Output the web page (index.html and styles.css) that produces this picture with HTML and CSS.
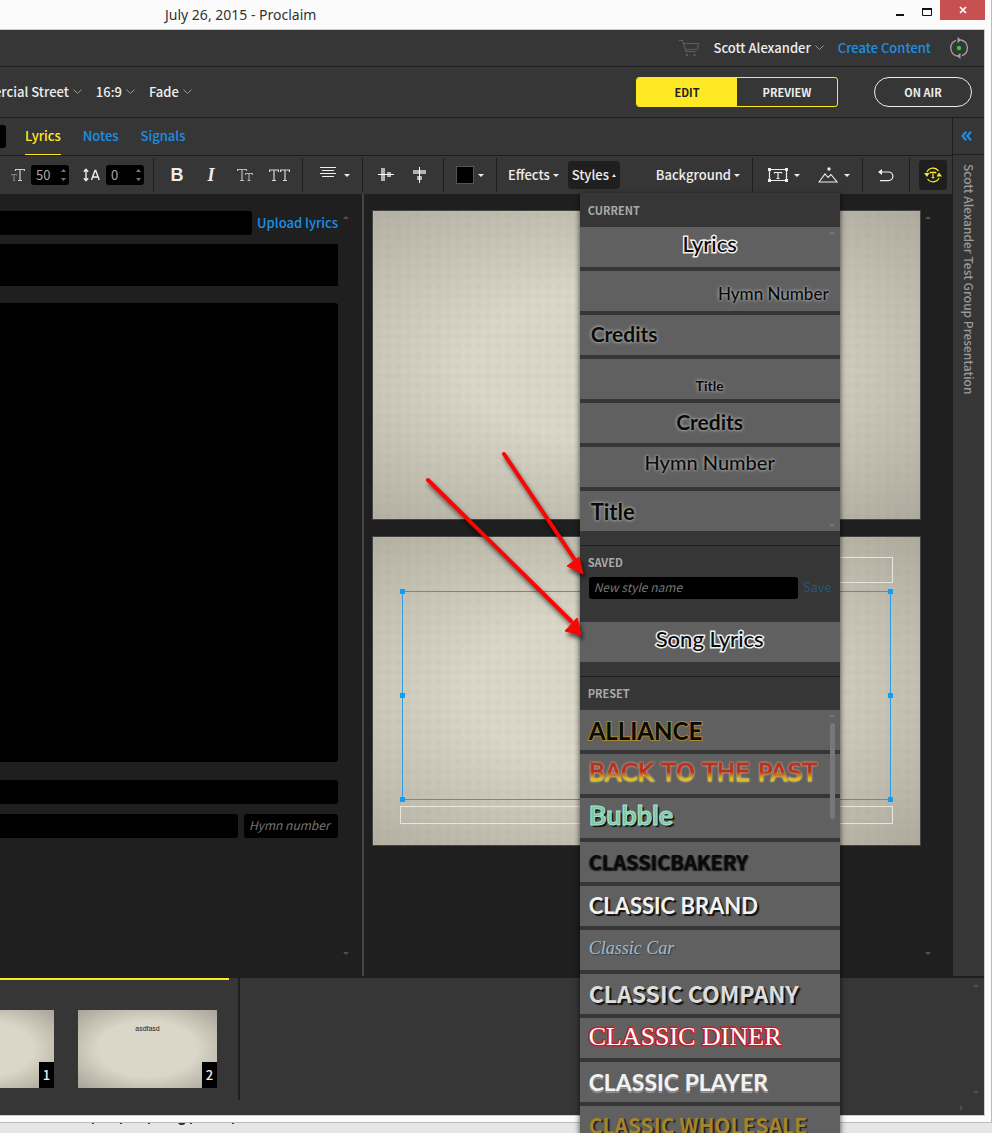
FILE: index.html
```html
<!DOCTYPE html>
<html lang="en">
<head>
<meta charset="utf-8">
<title>July 26, 2015 - Proclaim</title>
<link rel="stylesheet" href="styles.css">
</head>
<body>
<div class="page">
  <div class="window">
    <header class="titlebar">
      <h1 class="title">July 26, 2015 - Proclaim</h1>
      <div class="window-buttons">
        <button class="win-btn" aria-label="Minimize"><svg width="8" height="12"><path d="M0 10h8v2H0z" fill="#111"/></svg></button>
        <button class="win-btn" aria-label="Maximize"><svg width="10" height="12"><path d="M.5 4.500h9v7h-9z" fill="none" stroke="#111"/><path d="M0 4h10v2H0z" fill="#111"/></svg></button>
        <button class="win-btn win-close" aria-label="Close"><svg width="8" height="8"><path d="M1 1l6 6M7 1L1 7" stroke="#fff" stroke-width="1.700"/></svg></button>
      </div>
    </header>

    <div class="app">
      <div class="account-bar">
        <button class="plain" aria-label="Cart"><svg width="22" height="18" fill="none" stroke="#5c5c5c" stroke-width="1.200"><path d="M1 1.500h3.500l3.500 11h10.500M5.500 4.500h15l-1 5.500-12.500 1"/><circle cx="9" cy="16" r="1.200" fill="#5c5c5c" stroke="none"/><circle cx="16.500" cy="16" r="1.200" fill="#5c5c5c" stroke="none"/></svg></button>
        <button class="plain account">Scott Alexander <svg class="chev" width="9" height="6"><path d="M.5.5l4 4 4-4"/></svg></button>
        <a class="link" href="#">Create Content</a>
        <button class="plain" aria-label="Sync status"><svg width="20" height="22" fill="none" stroke="#a0a0a0" stroke-width="1.300"><path d="M8 19A8.200 8.200 0 0 1 7 3.400M12 3a8.200 8.200 0 0 1 1 15.700"/><path d="M8.500 0v6l4-3zM11.500 16v6l-4-3z" fill="#a0a0a0" stroke="none"/><circle cx="10" cy="11" r="2.200" fill="#1fd13c" stroke="none"/></svg></button>
      </div>

      <div class="show-bar">
        <label class="pick"><select aria-label="Location"><option>ercial Street</option></select><svg class="chev" width="9" height="6"><path d="M.5.5l4 4 4-4"/></svg></label>
        <label class="pick"><select aria-label="Aspect ratio"><option>16:9</option></select><svg class="chev" width="9" height="6"><path d="M.5.5l4 4 4-4"/></svg></label>
        <label class="pick"><select aria-label="Transition"><option>Fade</option></select><svg class="chev" width="9" height="6"><path d="M.5.5l4 4 4-4"/></svg></label>
        <div class="modes">
          <button class="mode mode-on">EDIT</button>
          <button class="mode">PREVIEW</button>
        </div>
        <button class="on-air">ON AIR</button>
      </div>

      <div class="workspace">
        <main class="work">
          <nav class="tabs">
            <span class="tab-stub"></span>
            <a class="tab tab-on" href="#">Lyrics</a>
            <a class="tab" href="#">Notes</a>
            <a class="tab" href="#">Signals</a>
          </nav>

          <div class="toolbar">
            <div class="group group-size">
              <svg width="14" height="14" fill="none" stroke="#ccc"><path d="M4.500 3V1.500h9V3M9 1.500v11M7 12.500h4" stroke-width="1.200"/><path d="M.5 7.500V6.500h5v1M3 6.500v6M2 12.500h2" stroke="#888"/></svg>
              <span class="spin"><input type="number" aria-label="Font size" value="50"><svg width="5" height="12"><path d="M0 3l2.500-3L5 3zM0 9l2.500 3L5 9z" fill="#777"/></svg></span>
              <svg class="lh-icon" width="17" height="14" fill="none" stroke="#eee" stroke-width="1.400"><path d="M3 2v10M.8 3.700L3 1.200l2.200 2.500M.8 10.300L3 12.800l2.200-2.500M8.500 12L12 2.500h.7L16.200 12M9.700 9h5.300"/></svg>
              <span class="spin"><input type="number" aria-label="Line spacing" value="0"><svg width="5" height="12"><path d="M0 3l2.500-3L5 3zM0 9l2.500 3L5 9z" fill="#777"/></svg></span>
            </div>
            <div class="group">
              <button class="tool tool-b">B</button>
              <button class="tool tool-i">I</button>
              <button class="tool tool-t" aria-label="Small caps"><svg width="17" height="14" fill="none" stroke="#bbb"><path d="M.5 3V1.500h9V3M5 1.500v11M3 12.500h4" stroke-width="1.200"/><path d="M8.500 7V5.500h7V7M12 5.500v7M10.500 12.500h3"/></svg></button>
              <button class="tool tool-t" aria-label="All caps"><svg width="21" height="14" fill="none" stroke="#d8d8d8" stroke-width="1.200"><path d="M.6 4V2h8.800v2M5 2v10.500M3 12.500h4M11.600 4V2h8.800v2M16 2v10.500M14 12.500h4"/></svg></button>
            </div>
            <div class="group group-menu">
              <button class="drop" aria-label="Align text"><svg class="align-icon" width="16" height="14" stroke="#eee"><path d="M0 .5h16M2 3.500h12M0 6.500h16M2 9.500h12"/></svg><i class="caret"></i></button>
            </div>
            <div class="group">
              <button class="tool" aria-label="Align middle"><svg width="16" height="14"><path d="M3 0h4v13H3zM9 4h4v5H9z" fill="#b4b4b4"/><path d="M0 6h16v1H0z" fill="#fff"/></svg></button>
              <button class="tool" aria-label="Align center"><svg width="14" height="16"><path d="M0 3h13v4H0zM4 9h5v4H4z" fill="#b4b4b4"/><path d="M6 0h1v16H6z" fill="#fff"/></svg></button>
            </div>
            <div class="group group-color">
              <button class="drop" aria-label="Text color"><span class="swatch"></span><i class="caret"></i></button>
            </div>
            <div class="group group-text">
              <button class="drop">Effects<i class="caret"></i></button>
              <div class="styles">
                <button class="drop styles-btn" aria-expanded="true">Styles<i class="caret caret-up"></i></button>
                <div class="menu">
                  <section class="sect">
                    <h2 class="sect-title">CURRENT</h2>
                    <div class="list">
                      <button class="item a-center s-lyrics">Lyrics</button>
                      <button class="item a-right s-hymn">Hymn Number</button>
                      <button class="item a-left s-credits">Credits</button>
                      <button class="item a-center s-title">Title</button>
                      <button class="item a-center s-credits">Credits</button>
                      <button class="item a-center s-hymn-big">Hymn Number</button>
                      <button class="item a-left s-title-big">Title</button>
                      <i class="tri tri-up list-up"></i><i class="tri tri-down list-down"></i>
                    </div>
                  </section>
                  <section class="sect">
                    <h2 class="sect-title">SAVED</h2>
                    <form class="save-row">
                      <input class="style-name" type="text" aria-label="New style name" placeholder="New style name">
                      <button class="save" type="button">Save</button>
                    </form>
                    <div class="list">
                      <button class="item a-center s-song">Song Lyrics</button>
                    </div>
                  </section>
                  <section class="sect">
                    <h2 class="sect-title">PRESET</h2>
                    <div class="list">
                      <button class="item p-alliance">ALLIANCE</button>
                      <button class="item"><span class="p-past">BACK TO THE PAST</span></button>
                      <button class="item p-bubble">Bubble</button>
                      <button class="item p-narrow p-bakery">CLASSICBAKERY</button>
                      <button class="item p-brand">CLASSIC BRAND</button>
                      <button class="item p-car">Classic Car</button>
                      <button class="item p-narrow p-company">CLASSIC COMPANY</button>
                      <button class="item p-diner">CLASSIC DINER</button>
                      <button class="item p-player">CLASSIC PLAYER</button>
                      <button class="item p-narrow p-wholesale">CLASSIC WHOLESALE</button>
                      <i class="tri tri-up list-up"></i><i class="thumb-bar"></i>
                    </div>
                  </section>
                  <svg class="pointers" width="172" height="200">
                    <g stroke="#fb0505" stroke-width="4" stroke-linecap="round"><path d="M84 6l71 106M8 32l143 141"/></g>
                    <path d="M163 126l-16-8 12-9zM161 187l-16-4 12-13z" fill="#fb0505" stroke="#fb0505" stroke-linejoin="round"/>
                  </svg>
                </div>
              </div>
              <button class="drop bg-btn">Background<i class="caret"></i></button>
            </div>
            <div class="group group-insert">
              <button class="drop" aria-label="Insert text"><svg width="20" height="16" fill="none" stroke="#eee"><path d="M1.500 2.500h17v11h-17z" stroke-width="1.200"/><path d="M6.500 6.500v-1h7v1M10 5.500v6M8.500 11.500h3" stroke-width="1.200"/><path d="M0 1h3v3H0zM17 1h3v3h-3zM0 12h3v3H0zM17 12h3v3h-3z" fill="#eee" stroke="none"/></svg><i class="caret"></i></button>
              <button class="drop" aria-label="Insert image"><svg width="20" height="16" fill="none" stroke="#eee" stroke-width="1.100"><path d="M1 15L7 7l3 3.500L13 7.500 19 15z"/><circle cx="11" cy="2" r="1.700" fill="#eee" stroke="none"/></svg><i class="caret"></i></button>
            </div>
            <div class="group group-undo">
              <button class="tool" aria-label="Undo"><svg width="17" height="13" fill="none" stroke="#eee" stroke-width="1.200"><path d="M2 3h8.500a4.300 4.300 0 0 1 0 8.700H2"/><path d="M0 3l4-3v6z" fill="#eee" stroke="none"/></svg></button>
            </div>
            <div class="group group-sync">
              <button class="sync" aria-label="Sync text"><svg width="18" height="16" fill="none" stroke="#ffe924" stroke-width="1.200"><path d="M3 5A6.700 6.700 0 0 1 14.500 4M15 11A6.700 6.700 0 0 1 3.500 12"/><path d="M0 6h5.500L3 10zM12.500 9.500H18l-3-4z" fill="#ffe924" stroke="none"/><path d="M6.300 6.500V5.300h5.400v1.200M9 5.300v5.400M7.700 10.700h2.600"/></svg></button>
            </div>
          </div>

          <div class="editor">
            <form class="lyrics">
              <i class="tri tri-up edge-up"></i><i class="tri tri-down edge-down"></i>
              <div class="row">
                <input class="field grow" type="text" aria-label="Song title">
                <a class="link" href="#">Upload lyrics</a>
              </div>
              <input class="field field-order" type="text" aria-label="Verse order">
              <textarea class="field field-lyrics" aria-label="Lyrics"></textarea>
              <input class="field" type="text" aria-label="Copyright">
              <div class="row row-end">
                <input class="field grow" type="text" aria-label="Hymnal">
                <input class="field field-hymn" type="text" aria-label="Hymn number" placeholder="Hymn number">
              </div>
            </form>
            <div class="canvas">
              <i class="tri tri-up edge-up"></i><i class="tri tri-down edge-down"></i>
              <div class="slide"></div>
              <div class="slide">
                <div class="box box-top"></div>
                <div class="box box-bottom"></div>
                <div class="selection"><i class="h h1"></i><i class="h h2"></i><i class="h h3"></i><i class="h h4"></i><i class="h h5"></i><i class="h h6"></i></div>
              </div>
            </div>
          </div>
        </main>
        <aside class="side">
          <button class="plain side-toggle" aria-label="Expand panel"><svg width="11" height="10" fill="none" stroke="#1b8fe8" stroke-width="2.200"><path d="M5.200.7L1.500 5l3.700 4.300M10 .7L6.300 5 10 9.300"/></svg></button>
          <span class="side-label">Scott Alexander Test Group Presentation</span>
        </aside>
      </div>

      <footer class="film">
        <div class="film-group">
          <div class="thumb"><span class="num">1</span></div>
          <div class="thumb"><span class="caption">asdfasd</span><span class="num">2</span></div>
        </div>
        <i class="tri tri-up film-up"></i><i class="tri tri-down film-down"></i><i class="tri tri-right film-right"></i>
      </footer>
    </div>
  </div>
  <div class="desktop"><svg width="240" height="3"><path d="M92 0h2v1h-2zM120 0h2v1h-2zM148 0h2v1h-2zM178 0h7v1l-2 1h-3zM190 0h2v1h-2zM232 0h2v1h-2z" fill="#333"/></svg></div>
</div>
</body>
</html>
```
FILE: styles.css
```css
* { box-sizing: border-box; }
body { margin: 0; overflow: hidden; font-family: "Noto Sans CJK SC", "Noto Sans", sans-serif; font-size: 13px; line-height: 20px; font-weight: 500; color: #eee; }
button, input, select, textarea { font: inherit; color: inherit; border: 0; background: none; padding: 0; margin: 0; }
a { text-decoration: none; }
svg { display: block; flex: none; }
i { font-style: normal; }
h1, h2 { margin: 0; font: inherit; }

.page { height: 100vh; display: flex; flex-direction: column; background: #e5e6e7; }
.window { flex: 1; min-height: 0; display: flex; flex-direction: column; background: #fbfbfb; padding: 0 6px 6px 0; border-right: 1px solid #bbb; border-bottom: 1px solid #bbb; }
.desktop { height: 10px; flex: none; }

.titlebar { height: 29px; flex: none; display: flex; justify-content: space-between; align-items: flex-start; }
.title { padding: 5px 0 0 165px; font-family: "Noto Sans", sans-serif; font-size: 14px; font-weight: 400; color: #333; }
.window-buttons { display: flex; }
.win-btn { width: 27px; height: 20px; display: flex; justify-content: center; align-items: center; }
.win-close { width: 45px; background: #c75050; }

.app { flex: 1; min-height: 0; display: flex; flex-direction: column; background: #363636; border: 1px solid #ccc; border-left: 0; }
.plain { display: flex; align-items: center; }
.chev { fill: none; stroke: #999; }
.link { color: #1b8fe8; }

.account-bar { flex: none; height: 37px; display: flex; align-items: center; justify-content: flex-end; gap: 14px; padding-right: 15px; border-bottom: 1px solid #1f1f1f; }
.account { gap: 4px; }
.account-bar > .plain:last-child { margin-left: 4px; }

.show-bar { flex: none; height: 51px; display: flex; align-items: center; padding-right: 12px; border-bottom: 1px solid #1f1f1f; }
.pick { display: flex; align-items: center; gap: 4px; margin-right: 14px; }
.pick:first-child { margin-left: -6px; }
.pick select { appearance: none; field-sizing: content; }
.modes { margin-left: auto; display: flex; width: 202px; height: 30px; border: 1px solid #ffe924; border-radius: 3px; overflow: hidden; font-size: 11px; font-weight: 700; }
.mode { flex: 1; }
.mode-on { background: #ffe924; color: #222; }
.on-air { margin-left: 36px; width: 98px; height: 30px; border: 1px solid #eee; border-radius: 15px; font-size: 11px; font-weight: 700; }

.workspace { flex: 1; min-height: 0; display: flex; border-bottom: 2px solid #1f1f1f; }
.work { flex: 1; min-width: 0; display: flex; flex-direction: column; }
.side { flex: none; width: 32px; border-left: 1px solid #1f1f1f; display: flex; flex-direction: column; align-items: center; }
.side-toggle { height: 37px; width: 100%; justify-content: center; padding-right: 5px; border-bottom: 1px solid #1f1f1f; }
.side-label { writing-mode: vertical-rl; margin-top: 9px; white-space: nowrap; font-size: 12px; color: #999; }

.tabs { flex: none; height: 38px; display: flex; align-items: center; gap: 22px; border-bottom: 1px solid #1f1f1f; }
.tab-stub { width: 6px; height: 23px; margin-right: -3px; background: #000; border-radius: 0 3px 3px 0; }
.tab { height: 37px; line-height: 36px; color: #1b8fe8; }
.tab-on { color: #ffe924; border-bottom: 1px solid #ffe924; }

.toolbar { flex: none; height: 38px; display: flex; align-items: center; }
.group { flex: none; height: 34px; display: flex; align-items: center; padding: 0 6px; border-right: 1px solid #1f1f1f; }
.tool { width: 34px; height: 30px; display: flex; justify-content: center; align-items: center; font-size: 18px; }
.tool-b { font-family: "Liberation Sans", sans-serif; font-weight: 700; }
.tool-i { font-family: "Liberation Serif", serif; font-style: italic; font-weight: 700; }
.drop { display: flex; align-items: center; gap: 4px; height: 28px; }
.caret { border: 3px solid transparent; border-top-color: #eee; border-bottom: 0; }
.caret-up { border: 2px solid transparent; border-top: 0; border-bottom: 3px solid #eee; }
.group-size { padding: 0 9px 0 11px; gap: 6px; }
.lh-icon { margin-left: 8px; }
.spin { width: 38px; height: 20px; display: flex; align-items: center; padding: 0 3px 0 5px; background: #000; border-radius: 3px; color: #aaa; }
.spin input { flex: 1; min-width: 0; width: 20px; height: 20px; appearance: textfield; font-weight: 400; }
.spin input::-webkit-inner-spin-button { appearance: none; }
.group-menu { padding: 0 12px 0 17px; }
.group-menu .drop { gap: 8px; }
.align-icon { margin-bottom: 2px; }
.group-color { padding: 0 12px; }
.swatch { width: 18px; height: 18px; background: #000; border: 1px solid #555; }
.group-text { flex: 1; padding: 0 12px 0 11px; gap: 9px; }
.group-text .drop { gap: 3px; }
.styles { position: relative; }
.group-text .styles-btn { padding: 0 4px; background: #1f1f1f; border-radius: 4px; }
.bg-btn { margin-left: auto; }
.group-insert { padding: 0 12px 0 15px; gap: 18px; }
.group-insert .drop { gap: 6px; }
.group-sync { padding: 0 5px 0 9px; border: 0; }
.sync { width: 28px; height: 30px; display: flex; justify-content: center; align-items: center; background: #1f1f1f; border-radius: 3px; }

.editor { flex: 1; min-height: 0; display: flex; background: #1f1f1f; }
.lyrics { position: relative; flex: 0 0 364px; border-right: 2px solid #444; padding: 17px 24px 0 0; display: flex; flex-direction: column; }
.row { display: flex; align-items: center; gap: 5px; margin-bottom: 9px; }
.row .link { white-space: nowrap; }
.row-end { gap: 6px; margin: 10px 0 0; }
.field { display: block; height: 24px; background: #000; border-radius: 0 3px 3px 0; resize: none; min-width: 0; }
.grow { flex: 1; }
.field-order { flex: none; height: 42px; border-radius: 0; }
.field-lyrics { height: 459px; margin: 17px 0 18px; }
.field-hymn, .style-name { padding: 0 0 3px 5px; border-radius: 3px; font-size: 12px; }
.field-hymn { width: 94px; }
::placeholder { color: #777; font-style: italic; font-weight: 400; opacity: 1; }

.canvas { position: relative; flex: 1; min-width: 0; padding: 16px 31px 0 8px; }
.slide { position: relative; aspect-ratio: 549 / 310; margin-bottom: 16px; border: 1px solid #444; }
.slide, .thumb { background-color: #dad6c8; background-image: radial-gradient(ellipse at 50% 50%, rgba(0,0,0,0) 50%, rgba(60,60,50,.32) 100%); }
.slide { background-image: radial-gradient(ellipse at 45% 50%, rgba(0,0,0,0) 35%, rgba(60,60,50,.28) 100%), radial-gradient(circle, rgba(120,115,90,.04) 3px, rgba(0,0,0,0) 4px); background-size: auto, 10px 10px; }
.box { position: absolute; border: 1px solid #e8e6dc; }
.box-top { left: 60%; right: 5%; top: 6.500%; height: 8.500%; }
.box-bottom { left: 5%; right: 5%; top: 87.200%; height: 6%; }
.selection { position: absolute; left: 5.300%; right: 5.300%; top: 17.500%; bottom: 14.500%; border: 1px solid #2d9ce0; }
.h { position: absolute; width: 5px; height: 5px; background: #109df5; }
.h1, .h2, .h3 { left: -3px; }
.h4, .h5, .h6 { right: -3px; }
.h1, .h4 { top: -3px; }
.h2, .h5 { top: calc(50% - 3px); }
.h3, .h6 { bottom: -3px; }

.tri { position: absolute; border: 3px solid transparent; }
.tri-up { border-top: 0; border-bottom-color: #505050; }
.tri-down { border-bottom: 0; border-top-color: #505050; }
.tri-right { border-right: 0; border-left-color: #505050; }
.edge-up { right: 13px; top: 22px; }
.edge-down { right: 13px; bottom: 21px; }
.canvas .edge-up, .canvas .edge-down { right: 21px; }
.film-up { right: 5px; top: 6px; }
.film-down { right: 5px; bottom: 21px; }
.film-right { right: 21px; bottom: 4px; }

.film { position: relative; flex: none; height: 137px; }
.film-group { position: relative; width: 240px; height: 122px; padding: 32px 21px 0 0; display: flex; justify-content: flex-end; gap: 24px; overflow: hidden; border-right: 2px solid #1f1f1f; }
.film-group::before { content: ""; position: absolute; left: 0; right: 9px; top: 0; height: 2px; background: #ffe924; }
.thumb { position: relative; flex: none; width: 139px; height: 78px; text-align: center; }
.caption { display: block; margin-top: 13px; font: 7px/12px "Liberation Sans", sans-serif; color: #222; }
.num { position: absolute; right: 0; bottom: 0; width: 15px; height: 26px; line-height: 26px; text-align: center; background: #000; }

.menu { position: absolute; z-index: 5; left: 12px; top: 32px; width: 260px; padding-top: 1px; background: #363636; box-shadow: 0 2px 6px rgba(0,0,0,.7); }
.sect { padding-bottom: 14px; border-bottom: 1px solid #1f1f1f; }
.sect-title { padding: 8px 8px 9px; font-size: 11px; line-height: 16px; font-weight: 700; color: #aaa; }
.save-row { display: flex; align-items: center; gap: 5px; margin: -2px 8px 23px 9px; }
.style-name { width: 210px; height: 22px; background: #000; }
.save { height: 22px; padding-bottom: 2px; color: #2a5578; font-weight: 400; }
.list { position: relative; display: flex; flex-direction: column; gap: 4px; }
.list-up { right: 5px; top: 4px; }
.list-down { right: 5px; bottom: 4px; }
.list .tri-up { border-bottom-color: #777; }
.list .tri-down { border-top-color: #777; }
.thumb-bar { position: absolute; right: 5px; top: 13px; width: 5px; height: 96px; border-radius: 3px; background: #777; }

.item { height: 40px; padding: 0 9px; background: #606060; text-align: left; white-space: nowrap; overflow: hidden; font-family: Lato, sans-serif; line-height: 24px; color: #0a0a0a; text-shadow: 0 0 3px #bbb, 0 0 4px #999; }
.a-center { text-align: center; }
.item.a-right { text-align: right; padding-right: 11px; }
.item.a-left { padding-left: 11px; }
.s-lyrics, .s-song { font-size: 22px; padding-bottom: 7px; -webkit-text-stroke: 3px #eee; paint-order: stroke fill; text-shadow: none; }
.s-hymn { font-size: 17px; padding-top: 5px; }
.s-credits { font-size: 21px; font-weight: 700; padding-bottom: 3px; }
.s-title { font-size: 14px; font-weight: 700; padding-top: 14px; }
.s-hymn-big { font-size: 20px; padding-bottom: 10px; }
.s-title-big { font-size: 22px; font-weight: 700; padding-top: 2px; }

.p-alliance { font-size: 24px; font-weight: 700; padding-top: 2px; -webkit-text-stroke: 2px #a8862e; paint-order: stroke fill; text-shadow: none; }
.p-past { font: 400 24px/26px "DejaVu Sans", sans-serif; color: transparent; background: linear-gradient(#b8301f 45%, #d8c020 70%); -webkit-background-clip: text; background-clip: text; -webkit-text-stroke: 1px transparent; text-shadow: none; filter: drop-shadow(0 0 1px #f4c8a8); }
.p-bubble { font-size: 27px; font-weight: 700; padding-bottom: 6px; color: #7bc5a8; -webkit-text-stroke: 1px #a8e4cc; text-shadow: 2px 2px 1px #111; }
.p-narrow { font-family: "Noto Sans CJK SC", sans-serif; font-weight: 700; }
.p-bakery { font-size: 20px; text-shadow: 1px 1px 1px #222, -1px 1px 1px #333; }
.p-brand, .p-player { font-size: 22px; font-weight: 700; color: #f2f2f2; text-shadow: 2px 2px 1px #111; }
.p-car { font-family: "Liberation Serif", serif; font-size: 18px; font-style: italic; font-weight: 400; color: #a4bac8; text-shadow: 1px 1px 1px #2c3c48; padding-bottom: 4px; }
.p-company { font-size: 23px; padding-bottom: 3px; color: #ddd; text-shadow: 2px 2px 1px #111; }
.p-diner { font-family: "Liberation Serif", serif; font-size: 26px; color: #fff; -webkit-text-stroke: 3px #c8202a; paint-order: stroke fill; text-shadow: none; padding-bottom: 3px; }
.p-player { font-size: 23px; text-shadow: 0 1px 0 #888, 0 2px 1px #999; }
.p-wholesale { font-size: 21px; padding-bottom: 3px; color: #a5852c; text-shadow: 2px 1px 1px #222; }

.pointers { position: absolute; left: -160px; top: 255px; pointer-events: none; filter: drop-shadow(2px 4px 2px rgba(0,0,0,.6)); }
```
